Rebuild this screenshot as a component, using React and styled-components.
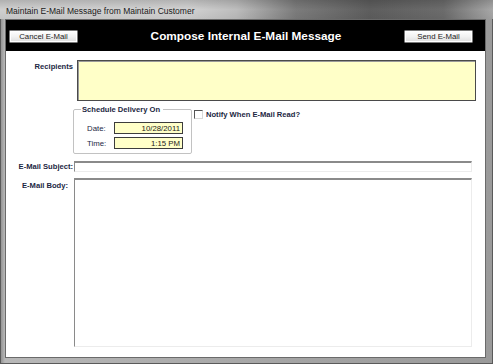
import React from 'react';
import styled, { createGlobalStyle } from 'styled-components';

const GlobalStyle = createGlobalStyle`
  html, body {
    margin: 0;
    padding: 0;
    background: #ffffff;
  }
  * {
    box-sizing: border-box;
  }
`;

const Window = styled.div`
  width: 493px;
  height: 364px;
  display: flex;
  flex-direction: column;
  background: linear-gradient(90deg, #8c8c8c 0%, #b8b8b8 1%, #a4a4a4 60%, #9a9a9a 100%);
  box-shadow: inset 0 0 0 1px #5a5a5a;
  font-family: 'Liberation Sans', Arial, sans-serif;
  overflow: hidden;
`;

const TitleBar = styled.div`
  height: 19px;
  display: flex;
  align-items: center;
  padding: 2px 0 0 6px;
  font-size: 8.5px;
  color: #1a1a1a;
  background:
    linear-gradient(180deg, rgba(0,0,0,0.15) 0%, rgba(255,255,255,0) 50%, rgba(0,0,0,0.05) 100%),
    linear-gradient(90deg, #cfcfcf 0%, #d2d2d2 38%, #bdbdbd 48%, #7c7c7c 60%, #5e5e5e 75%, #6c6c6c 90%, #a8a8a8 100%);
`;

const Frame = styled.div`
  flex: 1;
  display: flex;
  padding: 1px 8px 7px 6px;
`;

const Client = styled.div`
  flex: 1;
  display: flex;
  flex-direction: column;
  background: #ffffff;
  box-shadow: 0 0 0 1px #6a6a6a;
`;

const Header = styled.div`
  height: 31px;
  display: flex;
  align-items: center;
  justify-content: space-between;
  padding: 0 12px 0 3px;
  background: #000000;
`;

const HeaderTitle = styled.div`
  color: #ffffff;
  font-weight: bold;
  font-size: 11.8px;
  margin: 1px 0 0 10px;
`;

const Button = styled.button`
  width: 69px;
  height: 13px;
  margin-top: 1px;
  padding: 0;
  font-family: 'Liberation Sans', Arial, sans-serif;
  font-size: 7.8px;
  color: #1a1a1a;
  border: 1px solid #7a7a7a;
  border-radius: 1px;
  background: linear-gradient(180deg, #ffffff 0%, #f2f2f2 50%, #dedede 100%);
  box-shadow: inset 0 0 0 1px #ffffff;
`;

const Form = styled.div`
  flex: 1;
  display: flex;
  flex-direction: column;
  padding: 9px 13px 10px 0;
`;

const Row = styled.div`
  display: flex;
  align-items: flex-start;
  margin-top: ${p => p.gap || 0}px;
  flex: ${p => (p.grow ? 1 : 'none')};
`;

const Label = styled.div`
  width: 67px;
  flex: none;
  text-align: right;
  padding-right: ${p => p.pr || 0}px;
  padding-top: ${p => p.pt || 0}px;
  font-size: 7.6px;
  font-weight: bold;
  color: #1c2743;
  white-space: nowrap;
`;

const YellowBox = styled.div`
  flex: 1;
  height: 41px;
  margin: 0 -4px 0 4px;
  background: #ffffc8;
  border: 1px solid #4a4a4a;
  box-shadow: inset 1px 1px 0 #9a9a9a;
`;

const Fieldset = styled.fieldset`
  width: 119px;
  height: 49px;
  margin: 0 0 0 67px;
  padding: 0 8px 0 13px;
  border: 1px solid #c2c2c2;
  border-radius: 2px;
  display: flex;
  flex-direction: column;
  gap: 3px;
`;

const Legend = styled.legend`
  padding: 0 3px 0 1px;
  margin-left: -6px;
  font-size: 7.6px;
  font-weight: bold;
  color: #1c2743;
`;

const FieldRow = styled.div`
  display: flex;
  align-items: center;
  justify-content: space-between;
  margin-top: ${p => p.first ? 8 : 0}px;
`;

const SmallLabel = styled.span`
  font-size: 7.8px;
  color: #1c2743;
`;

const SmallInput = styled.div`
  width: 69px;
  height: 12px;
  padding: 0 2px;
  display: flex;
  align-items: center;
  justify-content: flex-end;
  font-size: 7.8px;
  color: #1a1a1a;
  background: #ffffc8;
  border: 1px solid #3c3c3c;
`;

const CheckWrap = styled.div`
  display: flex;
  align-items: center;
  gap: 3px;
  margin: 4px 0 0 2px;
`;

const CheckBox = styled.span`
  width: 9px;
  height: 9px;
  background: #ffffff;
  border-top: 1px solid #555555;
  border-left: 1px solid #555555;
  border-right: 1px solid #d8d8d8;
  border-bottom: 1px solid #d8d8d8;
`;

const CheckText = styled.span`
  font-size: 7.6px;
  font-weight: bold;
  color: #1c2743;
  margin-top: 1px;
`;

const Sunken = styled.div`
  flex: 1;
  margin-left: 1px;
  height: ${p => (p.h ? `${p.h}px` : 'auto')};
  align-self: stretch;
  background: #ffffff;
  border-top: 2px solid #8a8a8a;
  border-left: 1px solid #8a8a8a;
  border-right: 1px solid #ececec;
  border-bottom: 1px solid #ececec;
`;

export default function App() {
  return (
    <>
      <GlobalStyle />
      <Window>
        <TitleBar>Maintain E-Mail Message from Maintain Customer</TitleBar>
        <Frame>
          <Client>
            <Header>
              <Button>Cancel E-Mail</Button>
              <HeaderTitle>Compose Internal E-Mail Message</HeaderTitle>
              <Button>Send E-Mail</Button>
            </Header>
            <Form>
              <Row>
                <Label pt={2}>Recipients</Label>
                <YellowBox />
              </Row>
              <Row gap={4}>
                <Fieldset>
                  <Legend>Schedule Delivery On</Legend>
                  <FieldRow first>
                    <SmallLabel>Date:</SmallLabel>
                    <SmallInput>10/28/2011</SmallInput>
                  </FieldRow>
                  <FieldRow>
                    <SmallLabel>Time:</SmallLabel>
                    <SmallInput>1:15 PM</SmallInput>
                  </FieldRow>
                </Fieldset>
                <CheckWrap>
                  <CheckBox />
                  <CheckText>Notify When E-Mail Read?</CheckText>
                </CheckWrap>
              </Row>
              <Row gap={7}>
                <Label pt={1}>E-Mail Subject:</Label>
                <Sunken h={11} />
              </Row>
              <Row gap={6} grow>
                <Label pt={3} pr={5}>E-Mail Body:</Label>
                <Sunken />
              </Row>
            </Form>
          </Client>
        </Frame>
      </Window>
    </>
  );
}
